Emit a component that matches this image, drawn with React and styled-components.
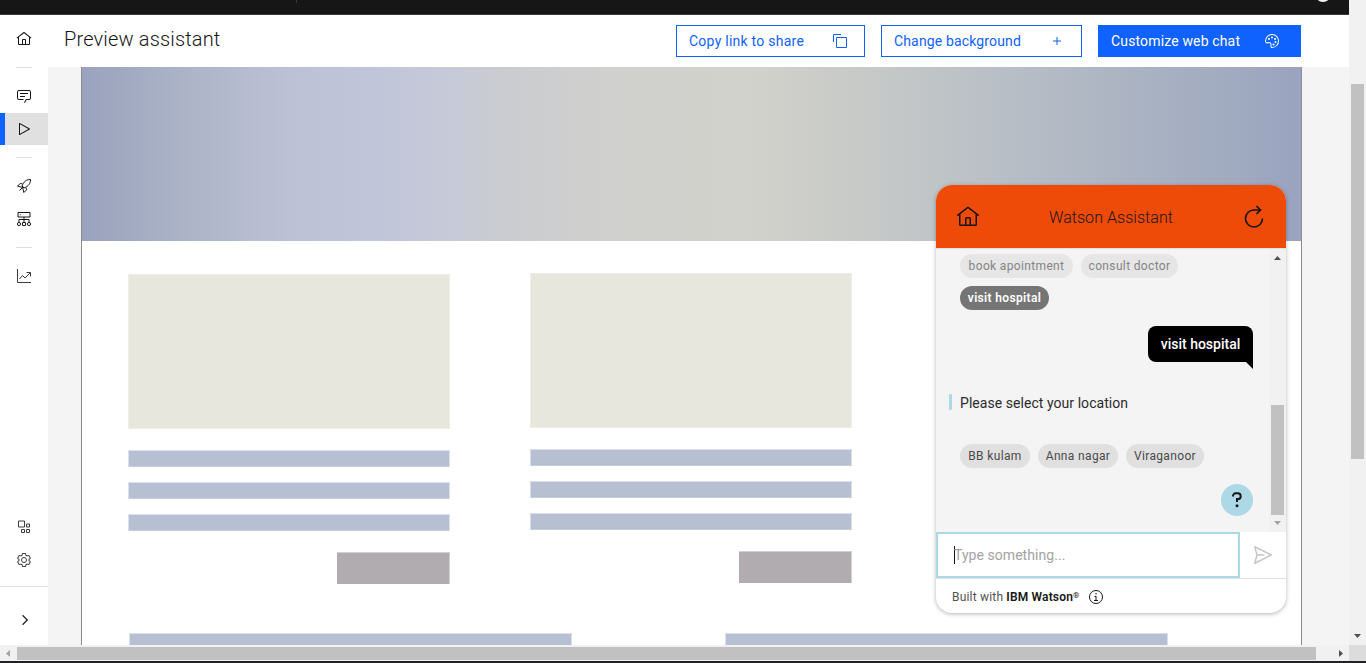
import React from 'react';
import styled, { createGlobalStyle } from 'styled-components';

const Global = createGlobalStyle`
  *, *::before, *::after { box-sizing: border-box; }
  html, body { margin: 0; height: 663px; overflow: hidden; background: #fff; }
  body { font-family: Roboto, "Liberation Sans", sans-serif; color: #161616; }
  button { font: inherit; padding: 0; border: 0; background: none; color: inherit; }
`;

const Screen = styled.div`
  display: grid;
  grid-template-columns: 1349px 17px;
  grid-template-rows: 645px 16px 2px;
  width: 1366px;
  height: 663px;
  overflow: hidden;
`;

const Page = styled.div`
  display: flex;
  flex-direction: column;
  min-height: 0;
  overflow: hidden;
`;

const TopBar = styled.header`
  display: flex;
  flex: none;
  height: 15px;
  background: #161616;
  border-bottom: 1px solid #393939;
`;
const TopDivider = styled.span`
  width: 1px;
  height: 3px;
  margin-left: 296px;
  background: #393939;
`;
const Avatar = styled.span`
  width: 16px;
  height: 16px;
  margin: -14.5px 0 0 1018px;
  border-radius: 50%;
  background: #f4f4f4;
`;

const Body = styled.div`
  display: flex;
  flex: 1;
  min-height: 0;
`;

const SideNav = styled.nav`
  display: flex;
  flex-direction: column;
  width: 48px;
  padding-top: 8px;
  background: #fff;
`;
const NavItem = styled.button`
  display: flex;
  align-items: center;
  justify-content: center;
  flex: none;
  height: ${p => p.$h || 33}px;
  color: ${p => p.$muted ? '#3d3d3d' : '#161616'};
  background: ${p => p.$active ? '#e0e0e0' : 'transparent'};
  box-shadow: ${p => p.$active ? 'inset 5px 0 0 #0f62fe' : 'none'};
`;
const NavRule = styled.hr`
  flex: none;
  width: 16px;
  height: 1px;
  margin: ${p => p.$m};
  border: 0;
  background: #e0e0e0;
`;
const NavSpacer = styled.div`flex: 1;`;
const NavFooter = styled.div`
  display: flex;
  justify-content: center;
  align-items: center;
  flex: none;
  height: 59px;
  padding: 8px 0 0 2px;
  margin-top: 10px;
  border-top: 1px solid #e0e0e0;
`;

const Main = styled.main`
  display: flex;
  flex-direction: column;
  flex: 1;
  min-width: 0;
  background: #f4f4f4;
`;
const Header = styled.div`
  display: flex;
  align-items: flex-start;
  justify-content: space-between;
  flex: none;
  height: 52px;
  padding: 10px 48px 0 16px;
  background: #fff;
`;
const Title = styled.h1`
  margin: 0;
  font-size: 20px;
  line-height: 28px;
  font-weight: 300;
  letter-spacing: 0.16px;
`;
const Actions = styled.div`
  display: flex;
  gap: 16px;
`;
const ActionButton = styled.button`
  display: flex;
  align-items: center;
  justify-content: space-between;
  width: ${p => p.$w}px;
  height: 32px;
  padding: 0 ${p => p.$pr || 16}px 0 12px;
  border: 1px solid #0f62fe;
  background: ${p => p.$primary ? '#0f62fe' : '#fff'};
  color: ${p => p.$primary ? '#fff' : '#0f62fe'};
  font-size: 14px;
  letter-spacing: ${p => p.$ls}px;
`;

const Preview = styled.section`
  position: relative;
  flex: 1;
  width: 1221px;
  margin-left: 33px;
  border: solid #8d8d8d;
  border-width: 0 1px;
  background: #fff;
  overflow: hidden;
`;
const Banner = styled.div`
  height: 174px;
  background: linear-gradient(90deg, #9ba4bf 0%, #9fa7c0 2.5%, #a6afc4 6%, #b0b6ca 10%, #bcc1d5 17%,
    #c0c5d9 24%, #c7cad8 30.5%, #cbccd0 35%, #d0d0ce 43%, #d1d2cb 54.7%, #cccdc9 60%,
    #c3c7c7 67%, #b4bbc5 79%, #a1abc0 94%, #9aa3bf 100%);
`;
const Cards = styled.div`
  display: flex;
  gap: 80px;
  padding: 32px 0 0 46px;
`;
const Card = styled.div`
  display: flex;
  flex-direction: column;
  width: 322px;
  padding-top: ${p => p.$shift || 0}px;
`;
const Picture = styled.div`
  height: 155px;
  margin-bottom: 21px;
  background: #e7e7de;
  border: 1px solid #eeeee8;
`;
const TextBar = styled.div`
  width: ${p => p.$w || 322}px;
  height: 17px;
  margin-bottom: 15px;
  background: #b7bfd3;
  border: 1px solid #dbdfe9;
  border-bottom-color: #c6cddd;
`;
const CardButton = styled.div`
  align-self: flex-end;
  width: 113px;
  height: 32px;
  margin-top: 6px;
  background: #b1acaf;
  border: solid #d2d0d1;
  border-width: 1px 1px 0 0;
`;
const Columns = styled.div`
  display: flex;
  gap: 153px;
  padding: 49px 0 0 47px;
`;

const Widget = styled.aside`
  position: absolute;
  top: 118px;
  left: 854px;
  display: flex;
  flex-direction: column;
  width: 350px;
  height: 428px;
  border-radius: 16px;
  overflow: hidden;
  background: #fff;
  box-shadow: 0 1px 4px rgba(0, 0, 0, 0.3);
`;
const WidgetHeader = styled.div`
  display: flex;
  align-items: center;
  justify-content: space-between;
  flex: none;
  height: 63px;
  padding: 0 20px;
  background: #ee4b08;
  color: #161616;
  font-size: 16px;
  font-weight: 300;
`;
const WidgetTitle = styled.span`
  padding-top: 2px;
  letter-spacing: 0.05px;
`;
const Conversation = styled.div`
  display: flex;
  flex: none;
  height: 284px;
  background: #f4f4f4;
  border-top: 1px solid #e0e0e0;
`;
const Messages = styled.div`
  display: flex;
  flex-direction: column;
  flex: 1;
  padding: 5px 16px 0 13px;
`;
const Chips = styled.div`
  display: flex;
  flex-wrap: wrap;
  gap: 8px;
  padding-left: 11px;
`;
const Chip = styled.button`
  width: ${p => p.$w}px;
  height: 24px;
  border-radius: 12px;
  font-size: 12px;
  line-height: 24px;
  text-align: center;
  white-space: nowrap;
  letter-spacing: 0.35px;
  color: ${p => p.$picked ? '#fff' : p.$off ? '#848484' : '#4a4a4a'};
  background: ${p => p.$picked ? '#757575' : p.$off ? '#e6e6e6' : '#e0e0e0'};
  font-weight: ${p => p.$picked ? 600 : 400};
`;
const Bubble = styled.div`
  position: relative;
  align-self: flex-end;
  width: 105px;
  height: 36px;
  margin-top: 16px;
  border-radius: 8px 8px 0 8px;
  background: #000;
  color: #fff;
  font-size: 14px;
  font-weight: 500;
  line-height: 36px;
  text-align: center;
  &::after {
    content: "";
    position: absolute;
    right: 0;
    top: 36px;
    border-style: solid;
    border-width: 0 7px 7px 0;
    border-color: transparent #000 transparent transparent;
  }
`;
const Reply = styled.div`
  display: flex;
  align-items: center;
  gap: 8px;
  height: 20px;
  margin: 31px 0;
  font-size: 14px;
  letter-spacing: 0.05px;
  color: #2b2b2b;
  &::before {
    content: "";
    width: 3px;
    height: 16px;
    margin-top: -2px;
    border-radius: 1px;
    background: #add8e6;
  }
`;
const Help = styled.button`
  display: flex;
  align-items: center;
  justify-content: center;
  align-self: flex-end;
  width: 32px;
  height: 32px;
  margin-top: 16px;
  border-radius: 50%;
  background: #add8e6;
`;
const InputRow = styled.div`
  display: flex;
  flex: none;
  height: 47px;
  border-bottom: 1px solid #e0e0e0;
`;
const Field = styled.div`
  display: flex;
  align-items: center;
  width: 304px;
  height: 46px;
  padding-left: 16px;
  border: 2px solid #add8e6;
  color: #a3a3a3;
  font-size: 14px;
  letter-spacing: 0.05px;
`;
const Caret = styled.span`
  width: 1px;
  height: 18px;
  margin-right: -1px;
  background: #161616;
`;
const Send = styled.button`
  display: flex;
  flex: 1;
  align-items: center;
  justify-content: center;
  color: #c6c6c6;
`;
const WidgetFooter = styled.div`
  display: flex;
  align-items: center;
  flex: 1;
  padding: 2px 0 0 16px;
  font-size: 12px;
  color: #525252;
  letter-spacing: 0.2px;
  svg { margin-left: 8px; color: #161616; }
`;
const Brand = styled.b`
  margin-left: 3px;
  font-weight: 600;
  color: #161616;
  letter-spacing: 0.17px;
  sup { font-size: 8px; line-height: 0; vertical-align: 3px; }
`;

const ChatScroll = styled.div`
  display: flex;
  flex-direction: column;
  align-items: center;
  justify-content: space-between;
  width: 17px;
  padding: 7px 0;
  background: #f1f1f1;
`;
const ChatThumb = styled.div`
  width: 13px;
  height: 110px;
  margin: auto 0 6px;
  background: #c1c1c1;
`;
const VScroll = styled.div`
  display: flex;
  flex-direction: column;
  align-items: center;
  justify-content: space-between;
  padding: 84px 2px 7px 2px;
  background: #f1f1f1;
`;
const VThumb = styled.div`
  width: 13px;
  height: 375px;
  background: #c1c1c1;
`;
const HScroll = styled.div`
  display: flex;
  align-items: center;
  padding: 0 6px;
  background: #f1f1f1;
`;
const HThumb = styled.div`
  width: 1299px;
  height: 13px;
  margin: 1px auto 0 7px;
  background: #c1c1c1;
`;
const Corner = styled.div`background: #dcdcdc;`;
const Edge = styled.div`
  grid-column: 1 / -1;
  background: #202124;
`;

const Icon = ({ size = 16, children }) => (
  <svg width={size} height={size} viewBox="0 0 32 32" fill="currentColor" aria-hidden="true">{children}</svg>
);
const HomeIcon = ({ size }) => (
  <Icon size={size}><path d="M16.61,2.21a1,1,0,0,0-1.24,0L1,13.42,2.24,15,4,13.62V26a2,2,0,0,0,2,2H26a2,2,0,0,0,2-2V13.63L29.76,15,31,13.43ZM18,26H14V18h4Zm2,0V18a2,2,0,0,0-2-2H14a2,2,0,0,0-2,2v8H6V12.06L16,4.27l10,7.8V26Z" /></Icon>
);
const ChatIcon = () => (
  <Icon><path d="M17.74,30,16,29l4-7h6a2,2,0,0,0,2-2V8a2,2,0,0,0-2-2H6A2,2,0,0,0,4,8V20a2,2,0,0,0,2,2h9v2H6a4,4,0,0,1-4-4V8A4,4,0,0,1,6,4H26a4,4,0,0,1,4,4V20a4,4,0,0,1-4,4H21.16ZM8 10H24V12H8zM8 16H18V18H8z" /></Icon>
);
const PlayIcon = () => (
  <Icon><path d="M7,28a1,1,0,0,1-1-1V5a1,1,0,0,1,1.4819-.8763l20,11a1,1,0,0,1,0,1.7525l-20,11A1.0005,1.0005,0,0,1,7,28ZM8,6.6909V25.3088L24.9248,16Z" /></Icon>
);
const RocketIcon = () => (
  <Icon>
    <g fill="none" stroke="currentColor" strokeWidth="2">
      <path d="M12 16C15.500 7.500 20 3 29 3c0 9-4.500 13.500-13 17M13 12 8.500 10.800 3 16.300 12 18.500M20 19l1.200 4.500L15.700 29 13.500 20" />
      <path d="M14.500 17.500 7 25M12 16l4 4" />
    </g>
  </Icon>
);
const NetworkIcon = () => (
  <Icon>
    <g fill="none" stroke="currentColor" strokeWidth="2">
      <path d="M4 3h24v9H4ZM16 12v11M6 22v-5h20v5M13 23h6v6h-6Z" />
      <circle cx="6" cy="26" r="3.200" /><circle cx="26" cy="26" r="3.200" />
    </g>
    <circle cx="8.500" cy="7.500" r="1.200" />
  </Icon>
);
const ChartIcon = () => (
  <Icon><path d="M4.670,28L11.390,19.230L16.190,23.010L16.190,23.010A2,2,0,0,0,18.990,22.650L26,13.570V18h2V10H20v2h4.570L17.410,21.430L12.610,17.650A2,2,0,0,0,9.830,18L4,25.560V2H2V28a2,2,0,0,0,2,2H30V28Z" /></Icon>
);
const TrendIcon = () => (
  <Icon>
    <g fill="none" stroke="currentColor" strokeWidth="2">
      <path d="M3 2v27h27M7 22l6-7 5 5L28.500 9.500M21 9h8v8" />
    </g>
  </Icon>
);
const AppsIcon = () => (
  <Icon>
    <g fill="none" stroke="currentColor" strokeWidth="2">
      <path d="M5 4h12v12H5ZM21 10h6v6h-6ZM11 21h6v6h-6ZM21 21h6v6h-6Z" />
    </g>
  </Icon>
);
const SettingsIcon = () => (
  <Icon>
    <path d="M27,16.76c0-.25,0-.5,0-.76s0-.51,0-.77l1.920-1.680A2,2,0,0,0,29.300,11L26.940,7a2,2,0,0,0-1.730-1,2,2,0,0,0-.64.1l-2.430.82a11.350,11.350,0,0,0-1.310-.75l-.51-2.520a2,2,0,0,0-2-1.610H13.640a2,2,0,0,0-2,1.610l-.51,2.520a11.480,11.480,0,0,0-1.320.75L7.430,6.060A2,2,0,0,0,6.790,6,2,2,0,0,0,5.060,7L2.700,11a2,2,0,0,0,.41,2.510L5,15.240c0,.25,0,.5,0,.76s0,.51,0,.77L3.110,18.450A2,2,0,0,0,2.700,21L5.060,25a2,2,0,0,0,1.730,1,2,2,0,0,0,.64-.1l2.430-.82a11.350,11.350,0,0,0,1.310.75l.51,2.520a2,2,0,0,0,2,1.610h4.720a2,2,0,0,0,2-1.610l.51-2.520a11.480,11.480,0,0,0,1.320-.75l2.420.82a2,2,0,0,0,.64.1,2,2,0,0,0,1.730-1L29.300,21a2,2,0,0,0-.41-2.510ZM25.210,24l-3.430-1.160a8.860,8.860,0,0,1-2.710,1.570L18.360,28H13.640l-.71-3.550a9.360,9.360,0,0,1-2.700-1.570L6.790,24,4.430,20l2.720-2.400a8.900,8.900,0,0,1,0-3.130L4.430,12,6.790,8l3.430,1.160a8.860,8.860,0,0,1,2.710-1.570L13.640,4h4.720l.71,3.550a9.360,9.360,0,0,1,2.700,1.570L25.210,8,27.570,12l-2.720,2.400a8.900,8.900,0,0,1,0,3.130L27.570,20Z" />
    <circle cx="16" cy="16" r="5" fill="none" stroke="currentColor" strokeWidth="2" />
  </Icon>
);
const ChevronIcon = () => (
  <Icon><path d="M22 16 12 26 10.600 24.600 19.200 16 10.600 7.400 12 6z" stroke="currentColor" strokeWidth="0.700" /></Icon>
);
const CopyIcon = () => (
  <Icon><path d="M28,10V28H10V10H28m0-2H10a2,2,0,0,0-2,2V28a2,2,0,0,0,2,2H28a2,2,0,0,0,2-2V10a2,2,0,0,0-2-2ZM4,18H2V4A2,2,0,0,1,4,2H18V4H4Z" /></Icon>
);
const AddIcon = () => (
  <Icon><path d="M17 15 17 8 15 8 15 15 8 15 8 17 15 17 15 24 17 24 17 17 24 17 24 15z" /></Icon>
);
const PaletteIcon = () => (
  <Icon>
    <circle cx="10" cy="12" r="2" /><circle cx="16" cy="9" r="2" /><circle cx="22" cy="12" r="2" />
    <circle cx="23" cy="18" r="2" /><circle cx="19" cy="23" r="2" />
    <path d="M16.540,2A14,14,0,0,0,2,16a4.820,4.820,0,0,0,6.090,4.650l1.120-.31A3,3,0,0,1,13,23.240V27a3,3,0,0,0,3,3A14,14,0,0,0,30,15.460,14.050,14.050,0,0,0,16.540,2Zm8.110,22.310A11.930,11.930,0,0,1,16,28a1,1,0,0,1-1-1V23.240a5,5,0,0,0-5-5,5.070,5.070,0,0,0-1.330.18l-1.120.31A2.820,2.820,0,0,1,4,16,12,12,0,0,1,16.470,4,12.180,12.180,0,0,1,28,15.530,11.890,11.890,0,0,1,24.650,24.320Z" />
  </Icon>
);
const RestartIcon = () => (
  <svg width="24" height="24" viewBox="0 0 24 24" fill="none" stroke="currentColor" strokeWidth="1.600" aria-hidden="true">
    <path d="M20.500 13.500A8.500 8.500 0 1 1 12 5H18.500M14.500 1.200 18.500 5 14.500 8.800" />
  </svg>
);
const SendIcon = () => (
  <Icon size={24}><path d="M27.450,15.110l-22-11a1,1,0,0,0-1.080.12,1,1,0,0,0-.33,1L7,16,4,26.740A1,1,0,0,0,5,28a1,1,0,0,0,.45-.11l22-11a1,1,0,0,0,0-1.780Zm-20.900,10L8.760,17H18V15H8.760L6.550,6.890,24.760,16Z" /></Icon>
);
const InfoIcon = () => (
  <Icon>
    <path d="M17 22 17 14 13 14 13 16 15 16 15 22 12 22 12 24 20 24 20 22 17 22z" />
    <circle cx="16" cy="9.500" r="1.500" />
    <circle cx="16" cy="16" r="13" fill="none" stroke="currentColor" strokeWidth="2" />
  </Icon>
);
const HelpIcon = () => (
  <svg width="20" height="20" viewBox="0 0 20 20" fill="none" stroke="#161616" strokeWidth="2" aria-hidden="true">
    <path d="M6 6.500V6a2.700 2.700 0 0 1 2.700-2.700h2.100a2.900 2.900 0 0 1 0 5.800H10V12" />
    <circle cx="10" cy="15.800" r="1.500" fill="#161616" stroke="none" />
  </svg>
);
const Arrow = ({ dir, color = '#505050' }) => {
  const vertical = dir === 'up' || dir === 'down';
  const d = { up: 'M0 4 3.500 0 7 4Z', down: 'M0 0H7L3.500 4Z', left: 'M4 0V7L0 3.500Z', right: 'M0 0 4 3.500 0 7Z' }[dir];
  return <svg width={vertical ? 7 : 4} height={vertical ? 4 : 7} fill={color} aria-hidden="true"><path d={d} /></svg>;
};

const BARS = [0, 1, 2];

function ContentCard({ shift }) {
  return (
    <Card $shift={shift}>
      <Picture />
      {BARS.map(i => <TextBar key={i} />)}
      <CardButton />
    </Card>
  );
}

function ChatWidget() {
  return (
    <Widget>
      <WidgetHeader>
        <HomeIcon size={24} />
        <WidgetTitle>Watson Assistant</WidgetTitle>
        <RestartIcon />
      </WidgetHeader>
      <Conversation>
        <Messages>
          <Chips>
            <Chip $w={113} $off>book apointment</Chip>
            <Chip $w={97} $off>consult doctor</Chip>
            <Chip $w={89} $picked>visit hospital</Chip>
          </Chips>
          <Bubble>visit hospital</Bubble>
          <Reply>Please select your location</Reply>
          <Chips>
            <Chip $w={70}>BB kulam</Chip>
            <Chip $w={80}>Anna nagar</Chip>
            <Chip $w={78}>Viraganoor</Chip>
          </Chips>
          <Help><HelpIcon /></Help>
        </Messages>
        <ChatScroll>
          <Arrow dir="up" />
          <ChatThumb />
          <Arrow dir="down" color="#a3a3a3" />
        </ChatScroll>
      </Conversation>
      <InputRow>
        <Field><Caret />Type something...</Field>
        <Send><SendIcon /></Send>
      </InputRow>
      <WidgetFooter>
        Built with <Brand>IBM Watson<sup>®</sup></Brand>
        <InfoIcon />
      </WidgetFooter>
    </Widget>
  );
}

export default function App() {
  return (
    <Screen>
      <Global />
      <Page>
        <TopBar><TopDivider /><Avatar /></TopBar>
        <Body>
          <SideNav>
            <NavItem $h={32}><HomeIcon /></NavItem>
            <NavRule $m="12px 16px 11px" />
            <NavItem $h={34}><ChatIcon /></NavItem>
            <NavItem $h={32} $active><PlayIcon /></NavItem>
            <NavRule $m="12px 16px 11px" />
            <NavItem><RocketIcon /></NavItem>
            <NavItem><NetworkIcon /></NavItem>
            <NavRule $m="12px 16px 11px" />
            <NavItem $muted><TrendIcon /></NavItem>
            <NavSpacer />
            <NavItem $muted><AppsIcon /></NavItem>
            <NavItem $muted><SettingsIcon /></NavItem>
            <NavFooter><ChevronIcon /></NavFooter>
          </SideNav>
          <Main>
            <Header>
              <Title>Preview assistant</Title>
              <Actions>
                <ActionButton $w={189} $ls={0.25}>Copy link to share<CopyIcon /></ActionButton>
                <ActionButton $w={201} $ls={0.15}>Change background<AddIcon /></ActionButton>
                <ActionButton $w={203} $pr={20} $ls={0.15} $primary>Customize web chat<PaletteIcon /></ActionButton>
              </Actions>
            </Header>
            <Preview>
              <Banner />
              <Cards>
                <ContentCard shift={1} />
                <ContentCard shift={0} />
              </Cards>
              <Columns>
                <TextBar $w={443} />
                <TextBar $w={443} />
              </Columns>
              <ChatWidget />
            </Preview>
          </Main>
        </Body>
      </Page>
      <VScroll><VThumb /><Arrow dir="down" /></VScroll>
      <HScroll>
        <Arrow dir="left" color="#a3a3a3" />
        <HThumb />
        <Arrow dir="right" />
      </HScroll>
      <Corner />
      <Edge />
    </Screen>
  );
}
